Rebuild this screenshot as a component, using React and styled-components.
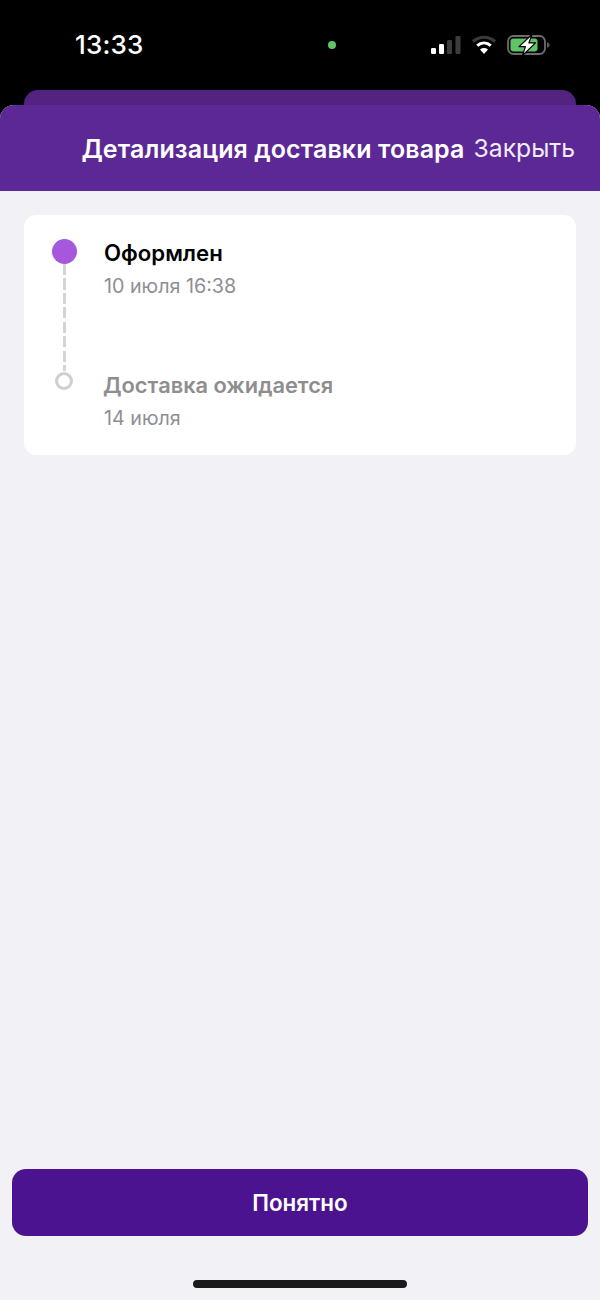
import React from "react";
import styled, { createGlobalStyle } from "styled-components";

const Global = createGlobalStyle`
  html, body { margin: 0; padding: 0; background: #000; }
  * { box-sizing: border-box; }
  body { font-family: Inter, "Noto Sans", "Liberation Sans", sans-serif; -webkit-font-smoothing: antialiased; }
`;

const Screen = styled.div`
  width: 600px; height: 1300px; background: #000; display: flex; flex-direction: column; overflow: hidden;
`;
const StatusBar = styled.div`
  height: 90px; flex: none; display: grid; grid-template-columns: 1fr auto 1fr; align-items: center;
  padding: 0 49px 0 75px; color: #fff;
`;
const Time = styled.div`
  font-size: 26px; font-weight: 500; line-height: 1; letter-spacing: 0.2px;
`;
const CameraDot = styled.div`
  width: 8px; height: 8px; border-radius: 50%; background: #5fc467; margin-left: 37px;
`;
const StatusIcons = styled.div`
  display: flex; align-items: center; justify-content: flex-end; gap: 11px;
`;
const BackSheet = styled.div`
  height: 15px; flex: none; margin: 0 24px; background: #52247f; border-radius: 14px 14px 0 0;
`;
const Sheet = styled.div`
  flex: 1; display: flex; flex-direction: column; background: #f1f1f6; border-radius: 14px 14px 0 0; overflow: hidden;
`;
const Header = styled.header`
  height: 86px; flex: none; background: #5c2896; color: #fff; display: flex; align-items: center;
  justify-content: flex-end; gap: 9px; padding: 2px 25px 0 0;
`;
const Title = styled.h1`
  margin: 0; font-size: 25px; font-weight: 600; line-height: 1.2; letter-spacing: 0.1px;
`;
const Close = styled.span`
  font-size: 24.7px; font-weight: 400; line-height: 1.2; color: #f1eaf8;
`;
const Content = styled.main`
  flex: 1; padding: 24px 24px 0;
`;
const Card = styled.section`
  height: 240px; background: #fff; border-radius: 12px; padding: 24px 28px 0; display: grid;
  grid-template-columns: 24px 1fr; column-gap: 28px; grid-template-rows: 132px 1fr;
`;
const Rail = styled.div`
  display: flex; flex-direction: column; align-items: center;
`;
const Dot = styled.div`
  flex: none; width: 25px; height: 25px; border-radius: 50%; background: #a757dc;
`;
const Ring = styled.div`
  flex: none; width: 18px; height: 18px; border-radius: 50%; border: 3px solid #cfcfcf; margin-top: 1px;
`;
const Dash = styled.div`
  flex: 1; width: 3px;
  background: repeating-linear-gradient(to bottom, #d4d4d4 0 11px, transparent 11px 14.5px);
`;
const Step = styled.div`
  display: flex; flex-direction: column; gap: 6px;
`;
const StepTitle = styled.div`
  font-size: ${p => (p.$muted ? "21.8px" : "22.2px")}; font-weight: 600; line-height: 28px; margin-left: ${p => (p.$muted ? "-1px" : "0")};
  color: ${p => (p.$muted ? "#8e8e90" : "#000")};
`;
const StepDate = styled.div`
  font-size: 19.7px; font-weight: 400; line-height: 26px; color: #8e8e93;
`;
const Footer = styled.footer`
  flex: none; padding: 0 12px; display: flex; flex-direction: column; align-items: center;
`;
const Button = styled.button`
  width: 100%; height: 67px; border: 0; border-radius: 14px; background: #4c1390; color: #fff;
  font: 600 22.4px Inter, "Noto Sans", sans-serif;
`;
const HomeBar = styled.div`
  width: 214px; height: 8px; border-radius: 4px; background: #1a1a1c; margin: 44px 0 12px;
`;

const Signal = () => (
  <svg width="30" height="20" viewBox="0 0 30 20">
    <rect x="0" y="13" width="5" height="6" rx="1.2" fill="#fff" />
    <rect x="8" y="9" width="5" height="10" rx="1.2" fill="#fff" />
    <rect x="16" y="5" width="5" height="14" rx="1.2" fill="#3c3c3c" />
    <rect x="24.5" y="1" width="5" height="18" rx="1.2" fill="#3c3c3c" />
  </svg>
);

const Wifi = () => (
  <svg width="24" height="20" viewBox="0 0 24 20">
    <path d="M1 6.5C7.5 0.8 16.5 0.8 23 6.5" fill="none" stroke="#3a3a3a" strokeWidth="3" />
    <path d="M5.2 10.6C9.3 7 14.7 7 18.8 10.6" fill="none" stroke="#fff" strokeWidth="3" />
    <path d="M12 19L8 14.4C10.4 12.5 13.6 12.5 16 14.4Z" fill="#fff" />
  </svg>
);

const Battery = () => (
  <svg width="44" height="24" viewBox="0 0 44 24">
    <rect x="1" y="3" width="37" height="18" rx="5.5" fill="none" stroke="#6d6d6d" strokeWidth="1.8" />
    <rect x="3.5" y="5.5" width="27" height="13" rx="3" fill="#5fc467" />
    <path d="M40 9.2c2 .5 2.6 1.6 2.6 2.8s-.6 2.3-2.6 2.8Z" fill="#5a5a5a" />
    <path d="M25 1.5L12 13.6h6.4L15.5 22.5l13-12.6h-6.6Z" fill="#fff" stroke="#000" strokeWidth="1.2" strokeLinejoin="round" />
  </svg>
);

export default function App() {
  return (
    <>
      <Global />
      <Screen>
        <StatusBar>
          <Time>13:33</Time>
          <CameraDot />
          <StatusIcons>
            <Signal />
            <Wifi />
            <Battery />
          </StatusIcons>
        </StatusBar>
        <BackSheet />
        <Sheet>
          <Header>
            <Title>Детализация доставки товара</Title>
            <Close>Закрыть</Close>
          </Header>
          <Content>
            <Card>
              <Rail>
                <Dot />
                <Dash />
              </Rail>
              <Step>
                <StepTitle>Оформлен</StepTitle>
                <StepDate>10 июля 16:38</StepDate>
              </Step>
              <Rail>
                <Ring />
              </Rail>
              <Step>
                <StepTitle $muted>Доставка ожидается</StepTitle>
                <StepDate>14 июля</StepDate>
              </Step>
            </Card>
          </Content>
          <Footer>
            <Button>Понятно</Button>
            <HomeBar />
          </Footer>
        </Sheet>
      </Screen>
    </>
  );
}
